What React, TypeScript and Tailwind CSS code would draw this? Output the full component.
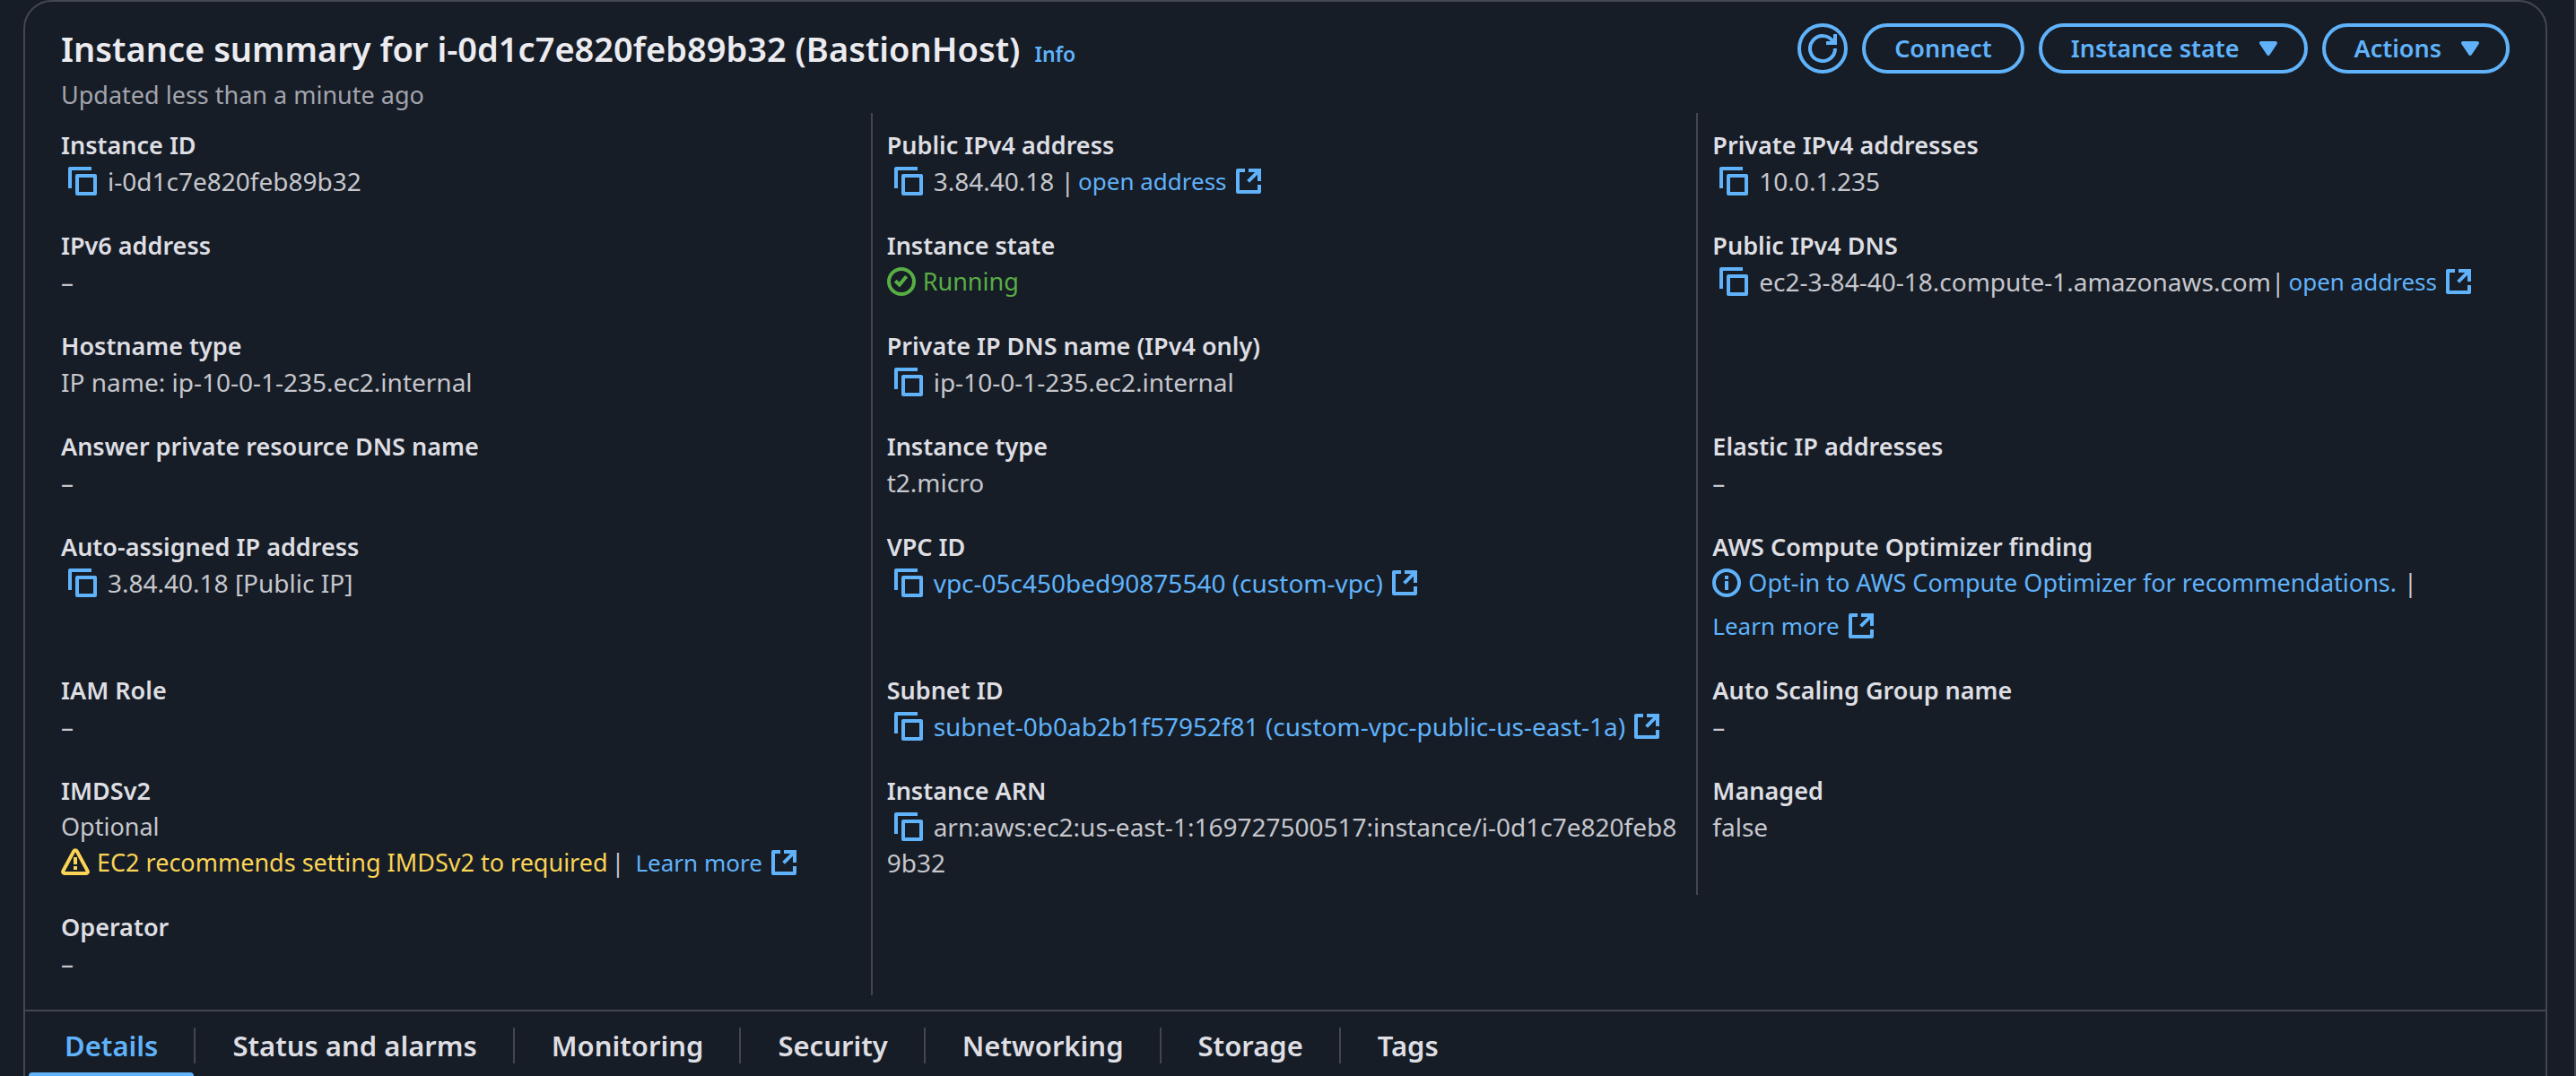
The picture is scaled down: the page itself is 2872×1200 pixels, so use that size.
import type { ReactNode } from "react";

const SVG = "size-8 shrink-0 fill-none stroke-current stroke-2";

function CopyIcon() {
  return (
    <svg viewBox="0 0 16 16" className={SVG} aria-hidden="true" strokeLinejoin="round">
      <path d="M1 12V1h12" />
      <path d="M5 5h10v10H5z" />
    </svg>
  );
}

function ExternalIcon() {
  return (
    <svg viewBox="0 0 16 16" className={SVG} aria-hidden="true">
      <path d="M14 10v4H2V2h4" strokeLinejoin="round" />
      <path d="M8 2h6v6" />
      <path d="m7.8 8.2 6-6" />
    </svg>
  );
}

function CheckIcon() {
  return (
    <svg viewBox="0 0 16 16" className={SVG} aria-hidden="true">
      <circle cx="8" cy="8" r="7" />
      <path d="M4.6 7.6 6.9 9.8l3.9-4.7" />
    </svg>
  );
}

function InfoIcon() {
  return (
    <svg viewBox="0 0 16 16" className={SVG} aria-hidden="true">
      <circle cx="8" cy="8" r="7" />
      <path d="M8 4v2M8 7v5" />
    </svg>
  );
}

function WarningIcon() {
  return (
    <svg viewBox="0 0 16 16" className={SVG} aria-hidden="true">
      <path d="M7.1 1.7 1.2 12.6c-.4.7.1 1.4.8 1.4h12c.7 0 1.2-.7.8-1.4L8.9 1.7c-.4-.7-1.4-.7-1.8 0z" />
      <path d="M8 5v4M8 10v2" />
    </svg>
  );
}

function RefreshIcon() {
  return (
    <svg viewBox="0 0 16 16" className={SVG} aria-hidden="true">
      <path d="M15 8a7 7 0 1 1-.9-3.4" />
      <path d="M10 5h5V0" />
    </svg>
  );
}

function CaretIcon() {
  return (
    <svg viewBox="0 0 16 16" className="size-8 shrink-0 fill-current stroke-current stroke-2" aria-hidden="true" strokeLinejoin="round">
      <path d="M4 5h8l-4 6z" />
    </svg>
  );
}

function Copy({ label }: { label: string }) {
  return (
    <button type="button" aria-label={`Copy ${label}`} className="ml-2 mr-3 inline-flex h-10 items-center align-top text-[#60b3fb]">
      <CopyIcon />
    </button>
  );
}

function ExtLink({ children }: { children: ReactNode }) {
  return (
    <a href="#" className="inline-flex h-10 items-center gap-2 whitespace-nowrap align-top text-[#60b3fb]">
      {children}
      <ExternalIcon />
    </a>
  );
}

function ActionLink({ children }: { children: ReactNode }) {
  return (
    <a href="#" className="ml-1 inline-flex h-10 items-center gap-2 whitespace-nowrap align-top text-[26px] text-[#60b3fb] first:ml-0">
      {children}
      <ExternalIcon />
    </a>
  );
}

type Field = { label: string; value: ReactNode };

const ROWS: (Field | null)[][] = [
  [
    { label: "Instance ID", value: <><Copy label="instance ID" />i-0d1c7e820feb89b32</> },
    {
      label: "Public IPv4 address",
      value: <><Copy label="public IPv4 address" />3.84.40.18 |<ActionLink>open address</ActionLink></>,
    },
    { label: "Private IPv4 addresses", value: <><Copy label="private IPv4 address" />10.0.1.235</> },
  ],
  [
    { label: "IPv6 address", value: "–" },
    {
      label: "Instance state",
      value: (
        <span className="inline-flex h-10 items-center gap-2 align-top text-[27px] text-[#58ae45]">
          <CheckIcon />
          Running
        </span>
      ),
    },
    {
      label: "Public IPv4 DNS",
      value: (
        <>
          <Copy label="public IPv4 DNS" />
          ec2-3-84-40-18.compute-1.amazonaws.com|<ActionLink>open address</ActionLink>
        </>
      ),
    },
  ],
  [
    { label: "Hostname type", value: "IP name: ip-10-0-1-235.ec2.internal" },
    { label: "Private IP DNS name (IPv4 only)", value: <><Copy label="private IP DNS name" />ip-10-0-1-235.ec2.internal</> },
    null,
  ],
  [
    { label: "Answer private resource DNS name", value: "–" },
    { label: "Instance type", value: "t2.micro" },
    { label: "Elastic IP addresses", value: "–" },
  ],
  [
    { label: "Auto-assigned IP address", value: <><Copy label="auto-assigned IP address" />3.84.40.18 [Public IP]</> },
    { label: "VPC ID", value: <><Copy label="VPC ID" /><ExtLink>vpc-05c450bed90875540 (custom-vpc)</ExtLink></> },
    {
      label: "AWS Compute Optimizer finding",
      value: (
        <span className="flex flex-col gap-2 text-[27px]">
          <span className="flex items-center gap-2">
            <a href="#" className="inline-flex h-10 items-center gap-2 text-[#60b3fb]">
              <InfoIcon />
              Opt-in to AWS Compute Optimizer for recommendations.
            </a>
            <span>|</span>
          </span>
          <span className="flex">
            <ActionLink>Learn more</ActionLink>
          </span>
        </span>
      ),
    },
  ],
  [
    { label: "IAM Role", value: "–" },
    {
      label: "Subnet ID",
      value: <><Copy label="subnet ID" /><ExtLink>subnet-0b0ab2b1f57952f81 (custom-vpc-public-us-east-1a)</ExtLink></>,
    },
    { label: "Auto Scaling Group name", value: "–" },
  ],
  [
    {
      label: "IMDSv2",
      value: (
        <>
          <span className="block text-[27px]">Optional</span>
          <span className="flex items-center text-[27px]">
            <span className="inline-flex items-center gap-2 text-[#fbd456]">
              <WarningIcon />
              EC2 recommends setting IMDSv2 to required
            </span>
            <span className="ml-1 mr-2">|</span>
            <ActionLink>Learn more</ActionLink>
          </span>
        </>
      ),
    },
    {
      label: "Instance ARN",
      value: (
        <>
          <Copy label="instance ARN" />
          arn:aws:ec2:us-east-1:169727500517:instance/i-0d1c7e820feb89b32
        </>
      ),
    },
    { label: "Managed", value: "false" },
  ],
  [{ label: "Operator", value: "–" }, null],
];

const TABS = ["Details", "Status and alarms", "Monitoring", "Security", "Networking", "Storage", "Tags"];

const BUTTON = "flex h-14 items-center gap-4 rounded-full border-4 border-[#60b3fb] pl-8 text-[27px] font-semibold text-[#60b3fb]";

export default function App() {
  return (
    <div className="h-screen overflow-hidden border-r-2 border-[#424650] bg-[#161d26] pl-[26px] pr-[30px] font-['Noto_Sans',sans-serif] text-[#c6c6cd]">
      <main className="min-h-[calc(100vh+40px)] rounded-t-[32px] border-2 border-[#424650]">
        <header className="flex items-start justify-between px-10 pt-6">
          <div>
            <div className="flex items-baseline gap-4">
              <h1 className="text-[38px] font-semibold leading-14 text-[#ebebf0]">
                Instance summary for i-0d1c7e820feb89b32 (BastionHost)
              </h1>
              <a href="#" className="text-[23px] font-semibold text-[#60b3fb]">Info</a>
            </div>
            <p className="mt-1 text-[27px] leading-10 text-[#a4a4ad]">Updated less than a minute ago</p>
          </div>
          <div className="flex gap-4">
            <button type="button" aria-label="Refresh" className="flex size-14 items-center justify-center rounded-full border-4 border-[#60b3fb] text-[#60b3fb]">
              <RefreshIcon />
            </button>
            <button type="button" className={`${BUTTON} pr-8`}>Connect</button>
            <button type="button" className={`${BUTTON} pr-6`}>Instance state<CaretIcon /></button>
            <button type="button" className={`${BUTTON} pr-6`}>Actions<CaretIcon /></button>
          </div>
        </header>

        <dl className="grid grid-cols-3 gap-x-8 px-10 pb-4">
          {ROWS.flatMap((row, r) =>
            row.map((field, c) => (
              <div
                key={`${r}-${c}`}
                className={c === 0 ? "py-4" : "-ml-[18px] border-l-2 border-[#424650] py-4 pl-4"}
              >
                {field && (
                  <>
                    <dt className="text-[27px] font-semibold leading-10 text-[#dedee3]">{field.label}</dt>
                    <dd className="break-all text-[28px] leading-10">{field.value}</dd>
                  </>
                )}
              </div>
            )),
          )}
        </dl>

        <div role="tablist" className="flex items-center border-t-2 border-[#424650] pl-1">
          {TABS.map((tab, i) => (
            <div key={tab} role="presentation" className="flex items-center">
              {i > 0 && <span className="mr-px h-10 w-0.5 bg-[#424650]" />}
              <button
                type="button"
                role="tab"
                aria-selected={i === 0}
                className={
                  i === 0
                    ? "relative h-[76px] px-10 text-[31px] font-semibold text-[#60b3fb]"
                    : "h-[76px] px-10 text-[31px] font-semibold text-[#dedee3]"
                }
              >
                {tab}
                {i === 0 && <span className="absolute inset-x-0 bottom-0 h-2 rounded-t bg-[#60b3fb]" />}
              </button>
            </div>
          ))}
        </div>
      </main>
    </div>
  );
}
